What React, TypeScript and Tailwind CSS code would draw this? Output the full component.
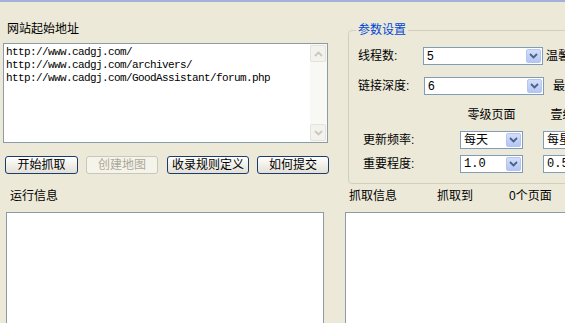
import React from "react";

const urls = [
  "http://www.cadgj.com/",
  "http://www.cadgj.com/archivers/",
  "http://www.cadgj.com/GoodAssistant/forum.php",
];

function Chevron({ up = false, color }: { up?: boolean; color: string }) {
  return (
    <svg width="9" height="6" viewBox="0 0 9 6">
      <path
        d={up ? "M1 5 L4.5 1.5 L8 5" : "M1 1 L4.5 4.5 L8 1"}
        fill="none"
        stroke={color}
        strokeWidth="1.8"
      />
    </svg>
  );
}

function Combo({ value, w, mono = false }: { value: string; w: string; mono?: boolean }) {
  return (
    <div className={`${w} h-[18px] shrink-0 border border-[#7f9db9] bg-white flex items-center`}>
      <span
        className={`flex-1 pl-[3px] leading-[14px] whitespace-nowrap overflow-hidden ${
          mono ? "font-['Liberation_Mono',monospace] text-[12px]" : ""
        }`}
      >
        {value}
      </span>
      <div className="w-[15px] h-[14px] mr-px rounded-[2px] border border-[#b4c6ef] bg-gradient-to-b from-[#d3defa] to-[#b3c6f5] flex items-center justify-center">
        <Chevron color="#4d6185" />
      </div>
    </div>
  );
}

function Button({ label, w, ml, disabled = false }: { label: string; w: string; ml: string; disabled?: boolean }) {
  return (
    <div
      className={`${w} ${ml} h-[18px] rounded-[3px] border flex items-center justify-center leading-[14px] ${
        disabled
          ? "border-[#c9c7ba] bg-[#f5f4ea] text-[#aca899]"
          : "border-[#1c3c6e] bg-gradient-to-b from-white to-[#e3e0d5] text-black"
      }`}
    >
      {label}
    </div>
  );
}

export default function App() {
  return (
    <div className="w-[565px] h-[323px] overflow-hidden bg-[#ece9d8] text-[12px] text-black font-['Liberation_Sans','Noto_Sans_CJK_SC',sans-serif] flex flex-col">
      <div className="h-[2px] shrink-0 bg-[#a3b1da]" />

      {/* top */}
      <div className="flex h-[184px] shrink-0">
        <div className="w-[340px] shrink-0 flex flex-col">
          <div className="mt-[20px] ml-[7px] h-[14px] leading-[14px]">网站起始地址</div>
          <div className="mt-[7px] ml-[3px] w-[325px] h-[100px] border border-[#8c9ca6] bg-white flex">
            <div className="flex-1 pl-[2px] pt-[2px] font-['Liberation_Mono',monospace] text-[11px] tracking-[-0.6px] leading-[13px]">
              {urls.map((u) => (
                <div key={u}>{u}</div>
              ))}
            </div>
            <div className="w-[17px] shrink-0 bg-[#f8f8f4] flex flex-col justify-between py-px pr-px">
              <div className="h-[17px] rounded-[2px] border border-[#e4e3db] bg-[#f3f2ec] flex items-center justify-center">
                <Chevron up color="#c9c8bd" />
              </div>
              <div className="h-[17px] rounded-[2px] border border-[#e4e3db] bg-[#f3f2ec] flex items-center justify-center">
                <Chevron color="#c9c8bd" />
              </div>
            </div>
          </div>
          <div className="mt-[13px] flex">
            <Button label="开始抓取" w="w-[73px]" ml="ml-[5px]" />
            <Button label="创建地图" w="w-[72px]" ml="ml-[8px]" disabled />
            <Button label="收录规则定义" w="w-[82px]" ml="ml-[9px]" />
            <Button label="如何提交" w="w-[72px]" ml="ml-[8px]" />
          </div>
        </div>

        <fieldset className="ml-[8px] mt-[21px] w-[262px] h-[161px] shrink-0 border border-[#d0d0bf] rounded-[4px]">
          <legend className="ml-[7px] px-[2px] h-[14px] leading-[14px] text-[#0046d5]">参数设置</legend>
          <div className="flex items-center mt-[10px] h-[18px]">
            <span className="ml-[9px] w-[65px] shrink-0">线程数:</span>
            <Combo value="5" w="w-[120px]" />
            <span className="ml-[3px] whitespace-nowrap">温馨提示</span>
          </div>
          <div className="flex items-center mt-[12px] h-[18px]">
            <span className="ml-[9px] w-[66px] shrink-0">链接深度:</span>
            <Combo value="6" w="w-[120px]" />
            <span className="ml-[9px] whitespace-nowrap">最大页数</span>
          </div>
          <div className="flex mt-[13px] h-[14px] leading-[14px]">
            <span className="ml-[111px] w-[63px] shrink-0 text-center">零级页面</span>
            <span className="ml-[20px] w-[63px] shrink-0 text-center whitespace-nowrap">壹级页面</span>
          </div>
          <div className="flex items-center mt-[9px] h-[18px]">
            <span className="ml-[14px] w-[97px] shrink-0">更新频率:</span>
            <Combo value="每天" w="w-[63px]" />
            <div className="ml-[20px]">
              <Combo value="每星期" w="w-[63px]" />
            </div>
          </div>
          <div className="flex items-center mt-[6px] h-[18px]">
            <span className="ml-[14px] w-[97px] shrink-0">重要程度:</span>
            <Combo value="1.0" w="w-[63px]" mono />
            <div className="ml-[20px]">
              <Combo value="0.5" w="w-[63px]" mono />
            </div>
          </div>
        </fieldset>
      </div>

      {/* bottom */}
      <div className="flex flex-1">
        <div className="w-[340px] shrink-0 flex flex-col">
          <div className="mt-[3px] ml-[10px] h-[14px] leading-[14px]">运行信息</div>
          <div className="mt-[9px] ml-[6px] w-[318px] h-[200px] border border-[#8c9ca6] bg-white" />
        </div>
        <div className="flex flex-col">
          <div className="mt-[3px] ml-[9px] h-[14px] leading-[14px] flex whitespace-nowrap">
            <span className="w-[88px]">抓取信息</span>
            <span className="w-[72px]">抓取到</span>
            <span>0个页面</span>
          </div>
          <div className="mt-[9px] ml-[5px] w-[260px] h-[200px] border border-[#8c9ca6] bg-white" />
        </div>
      </div>
    </div>
  );
}
